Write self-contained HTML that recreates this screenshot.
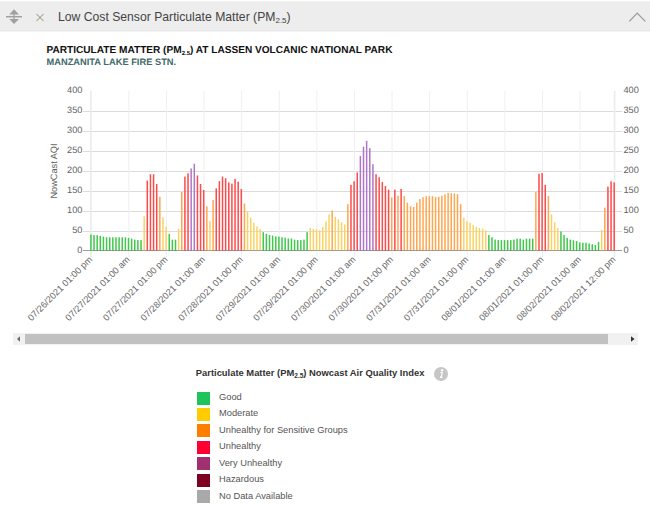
<!DOCTYPE html>
<html><head><meta charset="utf-8">
<style>
html,body{margin:0;padding:0;width:650px;height:515px;overflow:hidden;background:#fff;position:relative;font-family:"Liberation Sans",sans-serif;}
.ctitle,.csub,svg text{text-rendering:geometricPrecision;}
.hdr{position:absolute;left:0;top:2px;width:650px;height:28px;background:#ededed;}
.topstrip{position:absolute;left:0;top:1px;width:650px;height:1px;background:#f1f1f1;}
.hb1{position:absolute;left:0;top:30px;width:650px;height:1px;background:#e8e8e8;}
.hb2{position:absolute;left:0;top:31px;width:650px;height:1px;background:#f4f4f4;}
.htitle{position:absolute;left:58px;top:8.8px;font-size:12.2px;color:#444;white-space:nowrap;line-height:16px;}
.htitle sub{font-size:8px;vertical-align:-2px;line-height:0;}
.ctitle{position:absolute;left:46.5px;top:45px;font-size:10.1px;font-weight:bold;color:#111;white-space:nowrap;line-height:12px;}
.ctitle sub{font-size:6px;vertical-align:-2px;line-height:0;}
.csub{position:absolute;left:46.5px;top:56.6px;font-size:9.3px;font-weight:bold;color:#416a6a;white-space:nowrap;line-height:11px;}
.sb{position:absolute;left:12.6px;top:333px;width:625.8px;height:12px;background:#f1f1f1;}
.thumb{position:absolute;left:25px;top:334px;width:583px;height:9.6px;background:#c1c1c1;border-top:0;}
.ltitle{position:absolute;left:195.8px;top:367px;font-size:9.38px;font-weight:bold;color:#333;white-space:nowrap;line-height:12px;}
.ltitle sub{font-size:6.5px;vertical-align:-2px;line-height:0;}
.sw{position:absolute;left:197px;width:13px;height:13px;}
.lt{position:absolute;left:219px;font-size:9.3px;color:#555;white-space:nowrap;line-height:16px;}
.info{position:absolute;left:434.2px;top:366.6px;width:14px;height:14px;border-radius:50%;background:#c6c6c6;}
</style></head><body>
<div class="topstrip"></div>
<div class="hdr"></div><div class="hb1"></div><div class="hb2"></div>
<svg width="650" height="32" style="position:absolute;left:0;top:0">
<polygon points="9.3,14.4 14,9.3 19,14.4" fill="#a0a0a0"/>
<polygon points="9.3,19 14,24 19,19" fill="#a0a0a0"/>
<line x1="6" y1="16.7" x2="22" y2="16.7" stroke="#a0a0a0" stroke-width="1.5"/>
<line x1="14" y1="14" x2="14" y2="19.5" stroke="#a0a0a0" stroke-width="1.2"/>
<line x1="36.5" y1="14" x2="43.5" y2="21" stroke="#98a488" stroke-width="1.05"/>
<line x1="43.5" y1="14" x2="36.5" y2="21" stroke="#98a488" stroke-width="1.05"/>
<polyline points="629.3,21.4 637.2,13.1 645.3,21.4" fill="none" stroke="#9c9c9c" stroke-width="1.35"/>
</svg>
<div class="htitle">Low Cost Sensor Particulate Matter (PM<sub>2.5</sub>)</div>
<div class="ctitle">PARTICULATE MATTER (PM<sub>2.5</sub>) AT LASSEN VOLCANIC NATIONAL PARK</div>
<div class="csub">MANZANITA LAKE FIRE STN.</div>
<svg width="650" height="360" viewBox="0 0 650 360" style="position:absolute;left:0;top:0">
<rect x="83" y="250" width="539" height="1" fill="#c9c9c9"/><rect x="83" y="231" width="539" height="1" fill="#dcdcdc"/><rect x="83" y="211" width="539" height="1" fill="#dcdcdc"/><rect x="83" y="191" width="539" height="1" fill="#dcdcdc"/><rect x="83" y="171" width="539" height="1" fill="#dcdcdc"/><rect x="83" y="151" width="539" height="1" fill="#dcdcdc"/><rect x="83" y="131" width="539" height="1" fill="#dcdcdc"/><rect x="83" y="111" width="539" height="1" fill="#dcdcdc"/><rect x="90.10" y="91" width="1.6" height="166" fill="#ececec"/><rect x="128.35" y="91" width="1.0" height="166" fill="#efefef"/><rect x="165.95" y="91" width="1.0" height="166" fill="#efefef"/><rect x="203.56" y="91" width="1.0" height="166" fill="#efefef"/><rect x="241.16" y="91" width="1.0" height="166" fill="#efefef"/><rect x="278.76" y="91" width="1.0" height="166" fill="#efefef"/><rect x="316.36" y="91" width="1.0" height="166" fill="#efefef"/><rect x="353.96" y="91" width="1.0" height="166" fill="#efefef"/><rect x="391.57" y="91" width="1.0" height="166" fill="#efefef"/><rect x="429.17" y="91" width="1.0" height="166" fill="#efefef"/><rect x="466.77" y="91" width="1.0" height="166" fill="#efefef"/><rect x="504.37" y="91" width="1.0" height="166" fill="#efefef"/><rect x="541.97" y="91" width="1.0" height="166" fill="#efefef"/><rect x="579.58" y="91" width="1.0" height="166" fill="#efefef"/><rect x="613.79" y="91" width="1.6" height="166" fill="#ececec"/>
<rect x="90.15" y="234.49" width="1.5" height="16.11" fill="#40c84a"/><rect x="93.28" y="235.05" width="1.5" height="15.55" fill="#40c84a"/><rect x="96.42" y="235.21" width="1.5" height="15.39" fill="#40c84a"/><rect x="99.55" y="235.84" width="1.5" height="14.76" fill="#40c84a"/><rect x="102.68" y="236.64" width="1.5" height="13.96" fill="#40c84a"/><rect x="105.82" y="237.28" width="1.5" height="13.32" fill="#40c84a"/><rect x="108.95" y="237.28" width="1.5" height="13.32" fill="#40c84a"/><rect x="112.08" y="237.28" width="1.5" height="13.32" fill="#40c84a"/><rect x="115.22" y="237.28" width="1.5" height="13.32" fill="#40c84a"/><rect x="118.35" y="237.28" width="1.5" height="13.32" fill="#40c84a"/><rect x="121.49" y="237.28" width="1.5" height="13.32" fill="#40c84a"/><rect x="124.62" y="237.28" width="1.5" height="13.32" fill="#40c84a"/><rect x="127.75" y="238.00" width="1.5" height="12.60" fill="#40c84a"/><rect x="130.89" y="238.64" width="1.5" height="11.96" fill="#40c84a"/><rect x="134.02" y="239.63" width="1.5" height="10.97" fill="#40c84a"/><rect x="137.15" y="240.11" width="1.5" height="10.49" fill="#40c84a"/><rect x="140.29" y="240.11" width="1.5" height="10.49" fill="#40c84a"/><rect x="143.42" y="216.30" width="1.5" height="34.30" fill="#fad264"/><rect x="146.55" y="180.57" width="1.5" height="70.03" fill="#ff4a4a"/><rect x="149.69" y="174.27" width="1.5" height="76.33" fill="#ff4a4a"/><rect x="152.82" y="174.27" width="1.5" height="76.33" fill="#ff4a4a"/><rect x="155.95" y="184.00" width="1.5" height="66.60" fill="#ff4a4a"/><rect x="159.09" y="196.88" width="1.5" height="53.72" fill="#ffa650"/><rect x="162.22" y="217.22" width="1.5" height="33.38" fill="#fad264"/><rect x="165.35" y="226.79" width="1.5" height="23.81" fill="#fad264"/><rect x="168.49" y="233.85" width="1.5" height="16.75" fill="#40c84a"/><rect x="171.62" y="239.63" width="1.5" height="10.97" fill="#40c84a"/><rect x="174.75" y="239.63" width="1.5" height="10.97" fill="#40c84a"/><rect x="177.89" y="228.91" width="1.5" height="21.69" fill="#fad264"/><rect x="181.02" y="191.98" width="1.5" height="58.62" fill="#ffa650"/><rect x="184.16" y="176.58" width="1.5" height="74.02" fill="#ff4a4a"/><rect x="187.29" y="173.31" width="1.5" height="77.29" fill="#ff4a4a"/><rect x="190.42" y="168.45" width="1.5" height="82.15" fill="#b075c8"/><rect x="193.56" y="163.74" width="1.5" height="86.86" fill="#b075c8"/><rect x="196.69" y="175.43" width="1.5" height="75.17" fill="#ff4a4a"/><rect x="199.82" y="184.00" width="1.5" height="66.60" fill="#ff4a4a"/><rect x="202.96" y="189.98" width="1.5" height="60.62" fill="#ff4a4a"/><rect x="206.09" y="206.33" width="1.5" height="44.27" fill="#ffa650"/><rect x="209.22" y="221.09" width="1.5" height="29.51" fill="#fad264"/><rect x="212.36" y="199.95" width="1.5" height="50.65" fill="#ffa650"/><rect x="215.49" y="188.39" width="1.5" height="62.21" fill="#ff4a4a"/><rect x="218.62" y="181.21" width="1.5" height="69.39" fill="#ff4a4a"/><rect x="221.76" y="176.58" width="1.5" height="74.02" fill="#ff4a4a"/><rect x="224.89" y="178.22" width="1.5" height="72.38" fill="#ff4a4a"/><rect x="228.02" y="182.41" width="1.5" height="68.19" fill="#ff4a4a"/><rect x="231.16" y="183.60" width="1.5" height="67.00" fill="#ff4a4a"/><rect x="234.29" y="178.94" width="1.5" height="71.66" fill="#ff4a4a"/><rect x="237.42" y="181.73" width="1.5" height="68.87" fill="#ff4a4a"/><rect x="240.56" y="188.95" width="1.5" height="61.65" fill="#ff4a4a"/><rect x="243.69" y="203.54" width="1.5" height="47.06" fill="#ffa650"/><rect x="246.83" y="211.60" width="1.5" height="39.00" fill="#fad264"/><rect x="249.96" y="217.66" width="1.5" height="32.94" fill="#fad264"/><rect x="253.09" y="222.80" width="1.5" height="27.80" fill="#fad264"/><rect x="256.23" y="226.55" width="1.5" height="24.05" fill="#fad264"/><rect x="259.36" y="229.10" width="1.5" height="21.50" fill="#fad264"/><rect x="262.49" y="232.14" width="1.5" height="18.46" fill="#40c84a"/><rect x="265.63" y="233.77" width="1.5" height="16.83" fill="#40c84a"/><rect x="268.76" y="234.97" width="1.5" height="15.63" fill="#40c84a"/><rect x="271.89" y="235.64" width="1.5" height="14.96" fill="#40c84a"/><rect x="275.03" y="236.36" width="1.5" height="14.24" fill="#40c84a"/><rect x="278.16" y="236.60" width="1.5" height="14.00" fill="#40c84a"/><rect x="281.29" y="237.28" width="1.5" height="13.32" fill="#40c84a"/><rect x="284.43" y="237.76" width="1.5" height="12.84" fill="#40c84a"/><rect x="287.56" y="238.48" width="1.5" height="12.12" fill="#40c84a"/><rect x="290.69" y="238.48" width="1.5" height="12.12" fill="#40c84a"/><rect x="293.83" y="239.63" width="1.5" height="10.97" fill="#40c84a"/><rect x="296.96" y="240.11" width="1.5" height="10.49" fill="#40c84a"/><rect x="300.09" y="240.11" width="1.5" height="10.49" fill="#40c84a"/><rect x="303.23" y="239.63" width="1.5" height="10.97" fill="#40c84a"/><rect x="306.36" y="232.14" width="1.5" height="18.46" fill="#40c84a"/><rect x="309.50" y="227.95" width="1.5" height="22.65" fill="#fad264"/><rect x="312.63" y="229.10" width="1.5" height="21.50" fill="#fad264"/><rect x="315.76" y="229.34" width="1.5" height="21.26" fill="#fad264"/><rect x="318.90" y="230.26" width="1.5" height="20.34" fill="#fad264"/><rect x="322.03" y="227.27" width="1.5" height="23.33" fill="#fad264"/><rect x="325.16" y="221.41" width="1.5" height="29.19" fill="#fad264"/><rect x="328.30" y="214.43" width="1.5" height="36.17" fill="#fad264"/><rect x="331.43" y="210.44" width="1.5" height="40.16" fill="#ffa650"/><rect x="334.56" y="216.74" width="1.5" height="33.86" fill="#fad264"/><rect x="337.70" y="219.29" width="1.5" height="31.31" fill="#fad264"/><rect x="340.83" y="222.13" width="1.5" height="28.47" fill="#fad264"/><rect x="343.96" y="224.44" width="1.5" height="26.16" fill="#fad264"/><rect x="347.10" y="204.14" width="1.5" height="46.46" fill="#ffa650"/><rect x="350.23" y="184.80" width="1.5" height="65.80" fill="#ff4a4a"/><rect x="353.36" y="181.25" width="1.5" height="69.35" fill="#ff4a4a"/><rect x="356.50" y="172.44" width="1.5" height="78.16" fill="#ff4a4a"/><rect x="359.63" y="156.08" width="1.5" height="94.52" fill="#b075c8"/><rect x="362.76" y="146.71" width="1.5" height="103.89" fill="#b075c8"/><rect x="365.90" y="140.85" width="1.5" height="109.75" fill="#b075c8"/><rect x="369.03" y="148.11" width="1.5" height="102.49" fill="#b075c8"/><rect x="372.17" y="164.22" width="1.5" height="86.38" fill="#b075c8"/><rect x="375.30" y="174.23" width="1.5" height="76.37" fill="#ff4a4a"/><rect x="378.43" y="177.30" width="1.5" height="73.30" fill="#ff4a4a"/><rect x="381.57" y="182.01" width="1.5" height="68.59" fill="#ff4a4a"/><rect x="384.70" y="185.99" width="1.5" height="64.61" fill="#ff4a4a"/><rect x="387.83" y="189.66" width="1.5" height="60.94" fill="#ff4a4a"/><rect x="390.97" y="197.56" width="1.5" height="53.04" fill="#ffa650"/><rect x="394.10" y="189.58" width="1.5" height="61.02" fill="#ff4a4a"/><rect x="397.23" y="195.73" width="1.5" height="54.87" fill="#ffa650"/><rect x="400.37" y="188.95" width="1.5" height="61.65" fill="#ff4a4a"/><rect x="403.50" y="195.96" width="1.5" height="54.64" fill="#ffa650"/><rect x="406.63" y="202.74" width="1.5" height="47.86" fill="#ffa650"/><rect x="409.77" y="206.25" width="1.5" height="44.35" fill="#ffa650"/><rect x="412.90" y="206.93" width="1.5" height="43.67" fill="#ffa650"/><rect x="416.03" y="202.74" width="1.5" height="47.86" fill="#ffa650"/><rect x="419.17" y="199.00" width="1.5" height="51.60" fill="#ffa650"/><rect x="422.30" y="197.16" width="1.5" height="53.44" fill="#ffa650"/><rect x="425.43" y="196.20" width="1.5" height="54.40" fill="#ffa650"/><rect x="428.57" y="196.20" width="1.5" height="54.40" fill="#ffa650"/><rect x="431.70" y="196.20" width="1.5" height="54.40" fill="#ffa650"/><rect x="434.84" y="196.88" width="1.5" height="53.72" fill="#ffa650"/><rect x="437.97" y="196.88" width="1.5" height="53.72" fill="#ffa650"/><rect x="441.10" y="195.73" width="1.5" height="54.87" fill="#ffa650"/><rect x="444.24" y="194.37" width="1.5" height="56.23" fill="#ffa650"/><rect x="447.37" y="192.93" width="1.5" height="57.67" fill="#ffa650"/><rect x="450.50" y="193.41" width="1.5" height="57.19" fill="#ffa650"/><rect x="453.64" y="193.41" width="1.5" height="57.19" fill="#ffa650"/><rect x="456.77" y="194.09" width="1.5" height="56.51" fill="#ffa650"/><rect x="459.90" y="204.14" width="1.5" height="46.46" fill="#ffa650"/><rect x="463.04" y="217.66" width="1.5" height="32.94" fill="#fad264"/><rect x="466.17" y="221.41" width="1.5" height="29.19" fill="#fad264"/><rect x="469.30" y="222.80" width="1.5" height="27.80" fill="#fad264"/><rect x="472.44" y="224.92" width="1.5" height="25.68" fill="#fad264"/><rect x="475.57" y="226.79" width="1.5" height="23.81" fill="#fad264"/><rect x="478.70" y="227.95" width="1.5" height="22.65" fill="#fad264"/><rect x="481.84" y="228.67" width="1.5" height="21.93" fill="#fad264"/><rect x="484.97" y="230.26" width="1.5" height="20.34" fill="#fad264"/><rect x="488.10" y="234.97" width="1.5" height="15.63" fill="#40c84a"/><rect x="491.24" y="237.28" width="1.5" height="13.32" fill="#40c84a"/><rect x="494.37" y="239.63" width="1.5" height="10.97" fill="#40c84a"/><rect x="497.50" y="240.11" width="1.5" height="10.49" fill="#40c84a"/><rect x="500.64" y="240.11" width="1.5" height="10.49" fill="#40c84a"/><rect x="503.77" y="240.11" width="1.5" height="10.49" fill="#40c84a"/><rect x="506.91" y="240.11" width="1.5" height="10.49" fill="#40c84a"/><rect x="510.04" y="240.11" width="1.5" height="10.49" fill="#40c84a"/><rect x="513.17" y="239.63" width="1.5" height="10.97" fill="#40c84a"/><rect x="516.31" y="238.68" width="1.5" height="11.92" fill="#40c84a"/><rect x="519.44" y="238.68" width="1.5" height="11.92" fill="#40c84a"/><rect x="522.57" y="239.63" width="1.5" height="10.97" fill="#40c84a"/><rect x="525.71" y="238.68" width="1.5" height="11.92" fill="#40c84a"/><rect x="528.84" y="238.68" width="1.5" height="11.92" fill="#40c84a"/><rect x="531.97" y="238.68" width="1.5" height="11.92" fill="#40c84a"/><rect x="535.11" y="191.78" width="1.5" height="58.82" fill="#ffa650"/><rect x="538.24" y="173.79" width="1.5" height="76.81" fill="#ff4a4a"/><rect x="541.37" y="173.07" width="1.5" height="77.53" fill="#ff4a4a"/><rect x="544.51" y="184.80" width="1.5" height="65.80" fill="#ff4a4a"/><rect x="547.64" y="195.96" width="1.5" height="54.64" fill="#ffa650"/><rect x="550.77" y="214.43" width="1.5" height="36.17" fill="#fad264"/><rect x="553.91" y="222.13" width="1.5" height="28.47" fill="#fad264"/><rect x="557.04" y="227.95" width="1.5" height="22.65" fill="#fad264"/><rect x="560.18" y="231.46" width="1.5" height="19.14" fill="#40c84a"/><rect x="563.31" y="234.97" width="1.5" height="15.63" fill="#40c84a"/><rect x="566.44" y="237.76" width="1.5" height="12.84" fill="#40c84a"/><rect x="569.58" y="239.63" width="1.5" height="10.97" fill="#40c84a"/><rect x="572.71" y="240.31" width="1.5" height="10.29" fill="#40c84a"/><rect x="575.84" y="241.03" width="1.5" height="9.57" fill="#40c84a"/><rect x="578.98" y="242.42" width="1.5" height="8.18" fill="#40c84a"/><rect x="582.11" y="242.66" width="1.5" height="7.94" fill="#40c84a"/><rect x="585.24" y="242.66" width="1.5" height="7.94" fill="#40c84a"/><rect x="588.38" y="243.38" width="1.5" height="7.22" fill="#40c84a"/><rect x="591.51" y="244.30" width="1.5" height="6.30" fill="#40c84a"/><rect x="594.64" y="245.02" width="1.5" height="5.58" fill="#40c84a"/><rect x="597.78" y="241.95" width="1.5" height="8.65" fill="#40c84a"/><rect x="600.91" y="229.86" width="1.5" height="20.74" fill="#fad264"/><rect x="604.04" y="207.65" width="1.5" height="42.95" fill="#ffa650"/><rect x="607.18" y="186.63" width="1.5" height="63.97" fill="#ff4a4a"/><rect x="610.31" y="181.25" width="1.5" height="69.35" fill="#ff4a4a"/><rect x="613.44" y="182.41" width="1.5" height="68.19" fill="#ff4a4a"/>
<rect x="83" y="250" width="539" height="1" fill="#000" fill-opacity="0.22"/>
<g font-family="Liberation Sans, sans-serif" font-size="9.2" fill="#606060"><text x="82.4" y="253.00" text-anchor="end">0</text><text x="623.5" y="253.00" text-anchor="start">0</text><text x="82.4" y="233.06" text-anchor="end">50</text><text x="623.5" y="233.06" text-anchor="start">50</text><text x="82.4" y="213.12" text-anchor="end">100</text><text x="623.5" y="213.12" text-anchor="start">100</text><text x="82.4" y="193.18" text-anchor="end">150</text><text x="623.5" y="193.18" text-anchor="start">150</text><text x="82.4" y="173.24" text-anchor="end">200</text><text x="623.5" y="173.24" text-anchor="start">200</text><text x="82.4" y="153.30" text-anchor="end">250</text><text x="623.5" y="153.30" text-anchor="start">250</text><text x="82.4" y="133.36" text-anchor="end">300</text><text x="623.5" y="133.36" text-anchor="start">300</text><text x="82.4" y="113.42" text-anchor="end">350</text><text x="623.5" y="113.42" text-anchor="start">350</text><text x="82.4" y="93.48" text-anchor="end">400</text><text x="623.5" y="93.48" text-anchor="start">400</text></g>
<g font-family="Liberation Sans, sans-serif" font-size="9.2" fill="#666"><text transform="translate(92.90,260) rotate(-45)" text-anchor="end">07/26/2021 01:00 pm</text><text transform="translate(130.50,260) rotate(-45)" text-anchor="end">07/27/2021 01:00 am</text><text transform="translate(168.10,260) rotate(-45)" text-anchor="end">07/27/2021 01:00 pm</text><text transform="translate(205.71,260) rotate(-45)" text-anchor="end">07/28/2021 01:00 am</text><text transform="translate(243.31,260) rotate(-45)" text-anchor="end">07/28/2021 01:00 pm</text><text transform="translate(280.91,260) rotate(-45)" text-anchor="end">07/29/2021 01:00 am</text><text transform="translate(318.51,260) rotate(-45)" text-anchor="end">07/29/2021 01:00 pm</text><text transform="translate(356.11,260) rotate(-45)" text-anchor="end">07/30/2021 01:00 am</text><text transform="translate(393.72,260) rotate(-45)" text-anchor="end">07/30/2021 01:00 pm</text><text transform="translate(431.32,260) rotate(-45)" text-anchor="end">07/31/2021 01:00 am</text><text transform="translate(468.92,260) rotate(-45)" text-anchor="end">07/31/2021 01:00 pm</text><text transform="translate(506.52,260) rotate(-45)" text-anchor="end">08/01/2021 01:00 am</text><text transform="translate(544.12,260) rotate(-45)" text-anchor="end">08/01/2021 01:00 pm</text><text transform="translate(581.73,260) rotate(-45)" text-anchor="end">08/02/2021 01:00 am</text><text transform="translate(616.19,260) rotate(-45)" text-anchor="end">08/02/2021 12:00 pm</text></g>
<text transform="translate(56.5,171) rotate(-90)" text-anchor="middle" font-family="Liberation Sans, sans-serif" font-size="9.2" fill="#606060">NowCast AQI</text>
</svg>
<div class="sb"></div>
<div class="thumb"></div>
<svg width="650" height="20" style="position:absolute;left:0;top:330px">
<polygon points="17,9 20,6.3 20,11.7" fill="#6a6a6a"/>
<polygon points="634.5,9 631,6.2 631,11.8" fill="#333"/>
</svg>
<div class="ltitle">Particulate Matter (PM<sub>2.5</sub>) Nowcast Air Quality Index</div>
<div class="info"><svg width="14" height="14" style="position:absolute;left:0;top:0"><circle cx="8.1" cy="3.2" r="1.25" fill="#fff"/><polygon points="6.6,4.9 8.9,4.9 7.9,9.7 8.6,9.7 8.3,10.9 5.9,10.9 6.3,9.3 6.9,9.3 7.5,5.9 6.4,5.9" fill="#fff"/></svg></div>
<div class="sw" style="top:391.50px;background:#1ec45a"></div><div class="lt" style="top:389.00px">Good</div><div class="sw" style="top:407.92px;background:#ffcc00"></div><div class="lt" style="top:405.42px">Moderate</div><div class="sw" style="top:424.34px;background:#ff7e00"></div><div class="lt" style="top:421.84px">Unhealthy for Sensitive Groups</div><div class="sw" style="top:440.76px;background:#ff0033"></div><div class="lt" style="top:438.26px">Unhealthy</div><div class="sw" style="top:457.18px;background:#a03070"></div><div class="lt" style="top:454.68px">Very Unhealthy</div><div class="sw" style="top:473.60px;background:#7e0023"></div><div class="lt" style="top:471.10px">Hazardous</div><div class="sw" style="top:490.02px;background:#a9a9a9"></div><div class="lt" style="top:487.52px">No Data Available</div>
</body></html>
